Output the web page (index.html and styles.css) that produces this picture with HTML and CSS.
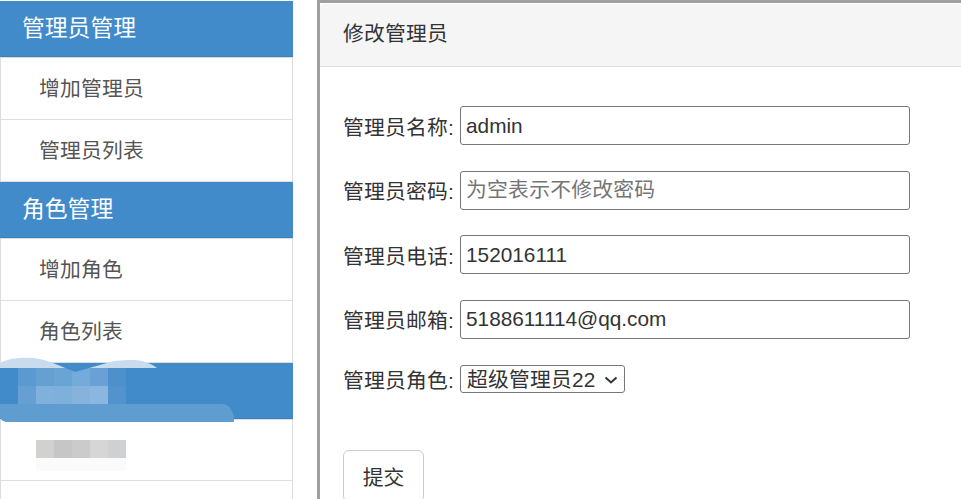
FILE: index.html
```html
<!DOCTYPE html>
<html lang="zh-CN">
<head>
<meta charset="utf-8">
<title>修改管理员</title>
<link rel="stylesheet" href="styles.css">
</head>
<body>
<div class="page">
  <aside class="sidebar">
    <h3 class="group">管理员管理</h3>
    <a class="item">增加管理员</a>
    <a class="item">管理员列表</a>
    <h3 class="group">角色管理</h3>
    <a class="item">增加角色</a>
    <a class="item">角色列表</a>
    <h3 class="group">&nbsp;</h3>
    <a class="item item-short">&nbsp;</a>
    <a class="item">&nbsp;</a>
    <svg class="mask" width="240" height="130" viewBox="0 350 240 130" aria-hidden="true">
      <path d="M0 363C8 358 22 357 34 358C42 359 48 361 53 363L107 363C115 360 125 360 135 360C145 361 152 364 157 368L0 368Z" fill="#c9dcee"/>
      <g>
        <rect x="18" y="368" width="18" height="18" fill="#5b9ad0"/>
        <rect x="36" y="368" width="18" height="18" fill="#65a0d3"/>
        <rect x="54" y="368" width="18" height="18" fill="#69a4d5"/>
        <rect x="72" y="368" width="18" height="18" fill="#75abda"/>
        <rect x="90" y="368" width="18" height="18" fill="#69a0d5"/>
        <rect x="108" y="368" width="18" height="18" fill="#4e90cb"/>
        <rect x="18" y="386" width="18" height="18" fill="#659fd3"/>
        <rect x="36" y="386" width="18" height="18" fill="#80b0dc"/>
        <rect x="54" y="386" width="18" height="18" fill="#7db0db"/>
        <rect x="72" y="386" width="18" height="18" fill="#87b2dc"/>
        <rect x="90" y="386" width="18" height="18" fill="#8ab7df"/>
        <rect x="108" y="386" width="18" height="18" fill="#5393cd"/>
      </g>
      <path d="M53 363L75 372L107 363Z" fill="#428bca"/>
      <path d="M0 404H222C230 404 234 412 234 422H6C3 421 1 420 0 418Z" fill="#5f9dd1"/>
      <rect x="36" y="440" width="18" height="18" fill="#d2d1d0"/>
      <rect x="54" y="440" width="18" height="18" fill="#c6c6c6"/>
      <rect x="72" y="440" width="18" height="18" fill="#cbcbcb"/>
      <rect x="90" y="440" width="18" height="18" fill="#d6d6d6"/>
      <rect x="108" y="440" width="18" height="18" fill="#cfd0d2"/>
      <rect x="36" y="458" width="90" height="13" fill="#fbfbfb"/>
    </svg>
  </aside>
  <main class="panel">
    <div class="panel-inner">
      <div class="panel-head">修改管理员</div>
      <form class="panel-body">
        <div class="field">
          <label class="label">管理员名称:</label>
          <input class="input" type="text" value="admin">
        </div>
        <div class="field">
          <label class="label">管理员密码:</label>
          <input class="input" type="text" placeholder="为空表示不修改密码">
        </div>
        <div class="field">
          <label class="label">管理员电话:</label>
          <input class="input" type="text" value="152016111">
        </div>
        <div class="field">
          <label class="label">管理员邮箱:</label>
          <input class="input" type="text" value="5188611114@qq.com">
        </div>
        <div class="field field-select">
          <label class="label">管理员角色:</label>
          <span class="select-wrap">
            <select class="select"><option>超级管理员22</option></select>
            <svg class="chevron" width="14" height="8" viewBox="0 0 14 8" aria-hidden="true"><path d="M1.5 1.5L7 6.5L12.5 1.5" fill="none" stroke="#333" stroke-width="2"/></svg>
          </span>
        </div>
        <button class="btn" type="button">提交</button>
      </form>
    </div>
  </main>
</div>
</body>
</html>
```
FILE: styles.css
```css
* { box-sizing: border-box; }
html, body { margin: 0; padding: 0; height: 499px; overflow: hidden; background: #fff; }
body {
  font-family: "Liberation Sans", "Noto Sans CJK SC", sans-serif;
  font-size: 20.8px;
  color: #333;
}
.page { display: flex; align-items: flex-start; height: 499px; overflow: hidden; }
.sidebar {
  position: relative;
  flex: none;
  width: 293px;
  margin-top: 1px;
  display: flex;
  flex-direction: column;
}
.group {
  margin: 0;
  height: 56px;
  padding-left: 22px;
  background: #428bca;
  border-bottom: 1px solid #3a80bd;
  color: #fff;
  font-size: 22.8px;
  font-weight: 400;
  line-height: 54px;
}
.item {
  display: block;
  height: 62px;
  padding-left: 38px;
  background: #fff;
  border: 1px solid #ddd;
  border-top: 0;
  color: #555;
  line-height: 62px;
  letter-spacing: 0.2px;
}
.group + .item { height: 63px; border-top: 1px solid #ddd; }
.group + .item-short { height: 62px; }
.mask { position: absolute; left: 0; top: 349px; }
.panel {
  flex: 1;
  margin-left: 24px;
  height: 499px;
  border-top: 3px solid #a0a0a0;
  border-left: 3px solid #a0a0a0;
}
.panel-inner {
  height: 100%;
  margin-top: 1px;
  border-top-left-radius: 4px;
  overflow: hidden;
}
.panel-head {
  height: 63px;
  padding-left: 23px;
  background: #f5f5f5;
  border-bottom: 1px solid #ddd;
  line-height: 60px;
  letter-spacing: 0.2px;
}
.panel-body { padding: 39px 0 0 23px; }
.field { display: flex; align-items: center; gap: 6px; height: 39px; margin-bottom: 25.6px; }
.field-select { height: 28px; margin-top: 26.4px; margin-bottom: 57px; }
.label { width: 111px; white-space: nowrap; letter-spacing: 0.2px; }
.input {
  width: 450px;
  height: 39px;
  padding: 0 5px;
  border: 1px solid #767676;
  border-radius: 3px;
  background: #fff;
  color: #333;
  font: inherit;
  outline: none;
}
.input::placeholder { color: #757575; opacity: 1; letter-spacing: 0.25px; }
.select-wrap { position: relative; display: block; width: 165px; height: 28px; }
.select {
  display: block;
  width: 165px;
  height: 28px;
  padding: 0 24px 0 6px;
  border: 1px solid #767676;
  border-radius: 3px;
  background: #fff;
  color: #333;
  font: inherit;
  letter-spacing: 0.2px;
  appearance: none;
  -webkit-appearance: none;
}
.chevron { position: absolute; left: 144px; top: 11px; pointer-events: none; }
.btn {
  display: block;
  width: 81px;
  height: 52px;
  border: 1px solid #ccc;
  border-radius: 6px;
  background: #fff;
  color: #333;
  font: inherit;
}
```
